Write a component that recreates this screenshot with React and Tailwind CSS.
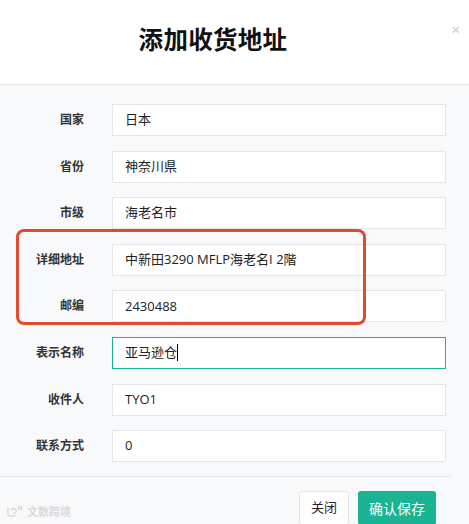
const fields = [
  { label: '国家', value: '日本' },
  { label: '省份', value: '神奈川県' },
  { label: '市级', value: '海老名市' },
  { label: '详细地址', value: '中新田3290 MFLP海老名I 2階' },
  { label: '邮编', value: '2430488' },
  { label: '表示名称', value: '亚马逊仓', focused: true },
  { label: '收件人', value: 'TYO1' },
  { label: '联系方式', value: '0' },
]

const FieldRow = ({ label, value, focused }) => (
  <div className="flex items-center">
    <label className="w-[84px] text-right text-[12px] font-bold text-[#333] leading-none">{label}</label>
    <div
      className={
        focused
          ? 'ml-[28px] w-[334px] h-[32px] flex items-center bg-white border border-[#1ab394] pl-[12px] text-[13px] text-[#222]'
          : 'ml-[28px] w-[334px] h-[32px] flex items-center bg-white border border-[#e5e6e7] pl-[12px] text-[13px] text-[#222]'
      }
    >
      <span>{value}</span>
      {focused && <span className="w-px h-[17px] bg-black" />}
    </div>
  </div>
)

export default function App() {
  return (
    <div
      className="relative w-[469px] h-[524px] overflow-hidden bg-[#f8f9fb]"
      style={{ fontFamily: '"Open Sans", "Noto Sans CJK SC", sans-serif' }}
    >
      {/* Header */}
      <div className="relative h-[85px] bg-white border-b border-[#e7e8ea] flex items-center justify-center pr-[43px]">
        <h1 className="text-[24.5px] font-bold text-[#111] tracking-[0.3px] -mt-[4px]">添加收货地址</h1>
        <span className="absolute right-[9px] top-[22px] text-[15px] leading-none text-[#c8c8c8]">×</span>
      </div>

      {/* Form */}
      <div className="flex flex-col gap-[14.6px] pt-[19px] pb-[14px]">
        {fields.map((f) => (
          <FieldRow key={f.label} {...f} />
        ))}
      </div>

      {/* Footer */}
      <div className="mr-[18px] border-t border-[#e5e6e7] flex justify-end gap-[9px] pt-[14px] pr-[15px]">
        <button className="w-[50px] h-[34px] bg-white border border-[#e5e6e7] rounded-[3px] text-[13px] text-[#222]">关闭</button>
        <button className="w-[78px] h-[34px] bg-[#1ab394] rounded-[3px] text-[14px] text-white">确认保存</button>
      </div>

      {/* Annotation */}
      <div className="absolute left-[16px] top-[229px] w-[350px] h-[96px] border-[3px] border-[#df4a30] rounded-[8px]" />

      {/* Watermark */}
      <div className="absolute left-[6px] top-[505px] flex items-center gap-[3px] text-[#dadada]">
        <svg width="18" height="12" viewBox="0 0 18 12" fill="none" stroke="#d8d8d8" strokeWidth="1.3">
          <path d="M2 2v7c0 1.5 1 2 2.5 2h5" />
          <path d="M5 5c1-2 4-2 5 0s-1 4-3 3" />
          <circle cx="14" cy="3" r="1.6" />
        </svg>
        <span className="text-[11px] font-bold leading-none">文数跨境</span>
      </div>
    </div>
  )
}
